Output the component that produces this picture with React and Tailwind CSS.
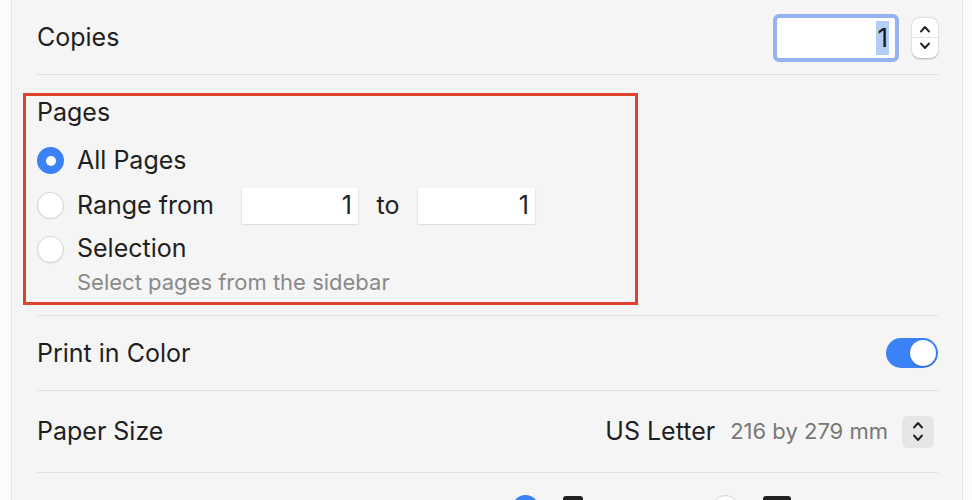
import React from "react";

const font = { fontFamily: "Inter, 'Noto Sans', sans-serif" };

function Chevron({ dir = "up", className = "" }) {
  return (
    <svg viewBox="0 0 12 8" className={className} fill="none" stroke="currentColor" strokeWidth="1.9" strokeLinecap="round" strokeLinejoin="round">
      {dir === "up" ? <path d="M2 6.5 L6 2 L10 6.5" /> : <path d="M2 1.5 L6 6 L10 1.5" />}
    </svg>
  );
}

function Radio({ checked }) {
  if (checked) {
    return (
      <span className="flex h-[27px] w-[27px] shrink-0 items-center justify-center rounded-full bg-[#3b82f6]">
        <span className="h-[10px] w-[10px] rounded-full bg-white" />
      </span>
    );
  }
  return <span className="block h-[27px] w-[27px] shrink-0 rounded-full border border-[#d4d4d4] bg-white shadow-[0_1px_1px_rgba(0,0,0,0.06)]" />;
}

function Divider() {
  return <div className="h-px bg-[#e0e0e0]" />;
}

function NumField({ value, w }) {
  return (
    <div className={`${w} flex h-[36px] items-center justify-end bg-white pr-[6px] text-[25px] text-[#222] shadow-[0_0.5px_1.5px_rgba(0,0,0,0.22)]`}>
      {value}
    </div>
  );
}

export default function App() {
  return (
    <div className="h-[500px] w-[972px] overflow-hidden bg-[#fcfcfc]" style={font}>
      <div className="ml-[11px] h-full w-[952px] border-x border-[#e4e4e4] bg-[#f5f5f5] pl-[25px] pr-[24px] text-[#1f1f1f]">
        {/* Copies */}
        <div className="flex h-[74px] items-center justify-between">
          <span className="pt-[1px] text-[25px]">Copies</span>
          <div className="flex items-center gap-[13px] pt-[1px]">
            <div className="flex h-[48px] w-[126px] items-center justify-end rounded-[6px] border-[4px] border-[#93b3f1] bg-white pr-[6px]">
              <span className="bg-[#b4cdf6] px-[1px] text-[26px] leading-[34px] text-[#1a1a1a]">1</span>
            </div>
            <div className="flex h-[40px] w-[26px] flex-col items-center justify-center rounded-[8px] bg-white text-[#222] shadow-[0_0.5px_2px_rgba(0,0,0,0.3)]">
              <Chevron dir="up" className="w-[12px]" />
              <span className="my-[4px] h-px w-full bg-[#e2e2e2]" />
              <Chevron dir="down" className="w-[12px]" />
            </div>
          </div>
        </div>
        <Divider />

        {/* Pages */}
        <div className="-ml-[14px] mt-[18px] w-[615px] border-[3px] border-[#e0432d] pb-[8px] pl-[11px]">
          <div className="mt-[2px] flex h-[30px] items-center text-[25px]">Pages</div>
          <div className="mt-[10px] flex h-[45px] items-center gap-[13px] text-[25px]">
            <Radio checked />
            <span>All Pages</span>
          </div>
          <div className="flex h-[45px] items-center text-[25px]">
            <Radio />
            <span className="ml-[13px] w-[165px]">Range from</span>
            <NumField value="1" w="w-[116px]" />
            <span className="w-[60px] text-center">to</span>
            <NumField value="1" w="w-[117px]" />
          </div>
          <div className="flex h-[42px] items-center gap-[13px] text-[25px]">
            <Radio />
            <span>Selection</span>
          </div>
          <div className="flex h-[24px] items-center pl-[40px] text-[22px] text-[#8a8a8a]">Select pages from the sidebar</div>
        </div>

        <div className="mt-[10px]">
          <Divider />
        </div>

        {/* Print in Color */}
        <div className="flex h-[74px] items-center justify-between">
          <span className="pt-[1px] text-[25px]">Print in Color</span>
          <div className="flex h-[30px] w-[52px] items-center justify-end rounded-full bg-[#3b82f6] pr-[2px]">
            <span className="h-[26px] w-[26px] rounded-full bg-white shadow-[0_1px_2px_rgba(0,0,0,0.2)]" />
          </div>
        </div>
        <Divider />

        {/* Paper Size */}
        <div className="flex h-[81px] items-center justify-between">
          <span className="pt-[1px] text-[25px]">Paper Size</span>
          <div className="flex items-center">
            <span className="text-[25px]">US Letter</span>
            <span className="ml-[15px] text-[22px] text-[#777]">216 by 279 mm</span>
            <div className="ml-[14px] mr-[4px] flex h-[32px] w-[32px] flex-col items-center justify-center gap-[5px] rounded-[6px] bg-[#e6e6e6] text-[#222]">
              <Chevron dir="up" className="w-[12px]" />
              <Chevron dir="down" className="w-[12px]" />
            </div>
          </div>
        </div>
        <Divider />

        {/* Orientation (cut off at the bottom) */}
        <div className="flex h-[80px] items-start pl-[475px] pt-[22px]">
          <Radio checked />
          <span className="ml-[24px] mt-[1px] h-[28px] w-[20px] rounded-[3px] bg-[#222]" />
          <div className="ml-[129px] flex">
            <Radio />
          </div>
          <span className="ml-[24px] mt-[1px] h-[20px] w-[28px] rounded-[3px] bg-[#222]" />
        </div>
      </div>
    </div>
  );
}
